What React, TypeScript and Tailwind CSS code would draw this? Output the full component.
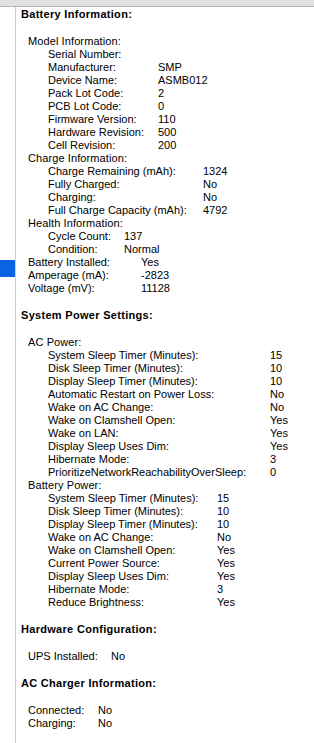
type Row = [string, string?];

type Group = {
  title: string;
  labelWidth: number;
  rows: Row[];
};

// left edge of the value column in each group is fixed, like the report view
const batteryGroups: Group[] = [
  {
    title: 'Model Information:',
    labelWidth: 110,
    rows: [
      ['Serial Number:'],
      ['Manufacturer:', 'SMP'],
      ['Device Name:', 'ASMB012'],
      ['Pack Lot Code:', '2'],
      ['PCB Lot Code:', '0'],
      ['Firmware Version:', '110'],
      ['Hardware Revision:', '500'],
      ['Cell Revision:', '200'],
    ],
  },
  {
    title: 'Charge Information:',
    labelWidth: 155,
    rows: [
      ['Charge Remaining (mAh):', '1324'],
      ['Fully Charged:', 'No'],
      ['Charging:', 'No'],
      ['Full Charge Capacity (mAh):', '4792'],
    ],
  },
  {
    title: 'Health Information:',
    labelWidth: 76,
    rows: [
      ['Cycle Count:', '137'],
      ['Condition:', 'Normal'],
    ],
  },
];

const batteryRows: Row[] = [
  ['Battery Installed:', 'Yes'],
  ['Amperage (mA):', '-2823'],
  ['Voltage (mV):', '11128'],
];

const powerGroups: Group[] = [
  {
    title: 'AC Power:',
    labelWidth: 222,
    rows: [
      ['System Sleep Timer (Minutes):', '15'],
      ['Disk Sleep Timer (Minutes):', '10'],
      ['Display Sleep Timer (Minutes):', '10'],
      ['Automatic Restart on Power Loss:', 'No'],
      ['Wake on AC Change:', 'No'],
      ['Wake on Clamshell Open:', 'Yes'],
      ['Wake on LAN:', 'Yes'],
      ['Display Sleep Uses Dim:', 'Yes'],
      ['Hibernate Mode:', '3'],
      ['PrioritizeNetworkReachabilityOverSleep:', '0'],
    ],
  },
  {
    title: 'Battery Power:',
    labelWidth: 169,
    rows: [
      ['System Sleep Timer (Minutes):', '15'],
      ['Disk Sleep Timer (Minutes):', '10'],
      ['Display Sleep Timer (Minutes):', '10'],
      ['Wake on AC Change:', 'No'],
      ['Wake on Clamshell Open:', 'Yes'],
      ['Current Power Source:', 'Yes'],
      ['Display Sleep Uses Dim:', 'Yes'],
      ['Hibernate Mode:', '3'],
      ['Reduce Brightness:', 'Yes'],
    ],
  },
];

function Rows({ rows, labelWidth, indent }: { rows: Row[]; labelWidth: number; indent: string }) {
  return (
    <div className={indent}>
      {rows.map(([label, value], i) => (
        <div key={i} className="flex h-[13px] items-center whitespace-nowrap">
          <span className="shrink-0" style={{ width: labelWidth }}>
            {label}
          </span>
          <span>{value}</span>
        </div>
      ))}
    </div>
  );
}

function GroupBlock({ group }: { group: Group }) {
  return (
    <div>
      <div className="flex h-[13px] items-center pl-[7px] tracking-[0.1px]">{group.title}</div>
      <Rows rows={group.rows} labelWidth={group.labelWidth} indent="pl-[27px]" />
    </div>
  );
}

function SectionTitle({ children, first }: { children: string; first?: boolean }) {
  return (
    <div
      className={`flex h-[13px] items-center font-bold tracking-[0.3px] mb-[14px] ${first ? '' : 'mt-[14px]'}`}
    >
      {children}
    </div>
  );
}

export default function App() {
  return (
    <div
      className="w-[314px] h-[743px] bg-white text-black overflow-hidden text-[11px] leading-[13px]"
      style={{ fontFamily: '"Liberation Sans", Arial, sans-serif' }}
    >
      <div className="h-[7px] bg-[#e2e2e2] border-b border-[#b4b4b4]" />
      <div className="flex h-[736px]">
        <div className="w-[16px] shrink-0 border-r border-[#cfcfcf]">
          <div className="mt-[253px] h-[17px] bg-[#0a63e3]" />
        </div>
        <div className="flex-1 pl-[5px] pt-[1px]">
          <SectionTitle first>Battery Information:</SectionTitle>
          {batteryGroups.map((g) => (
            <GroupBlock key={g.title} group={g} />
          ))}
          <Rows rows={batteryRows} labelWidth={113} indent="pl-[7px]" />

          <SectionTitle>System Power Settings:</SectionTitle>
          {powerGroups.map((g) => (
            <GroupBlock key={g.title} group={g} />
          ))}

          <SectionTitle>Hardware Configuration:</SectionTitle>
          <Rows rows={[['UPS Installed:', 'No']]} labelWidth={83} indent="pl-[7px]" />

          <SectionTitle>AC Charger Information:</SectionTitle>
          <Rows
            rows={[
              ['Connected:', 'No'],
              ['Charging:', 'No'],
            ]}
            labelWidth={70}
            indent="pl-[7px]"
          />
        </div>
      </div>
    </div>
  );
}
